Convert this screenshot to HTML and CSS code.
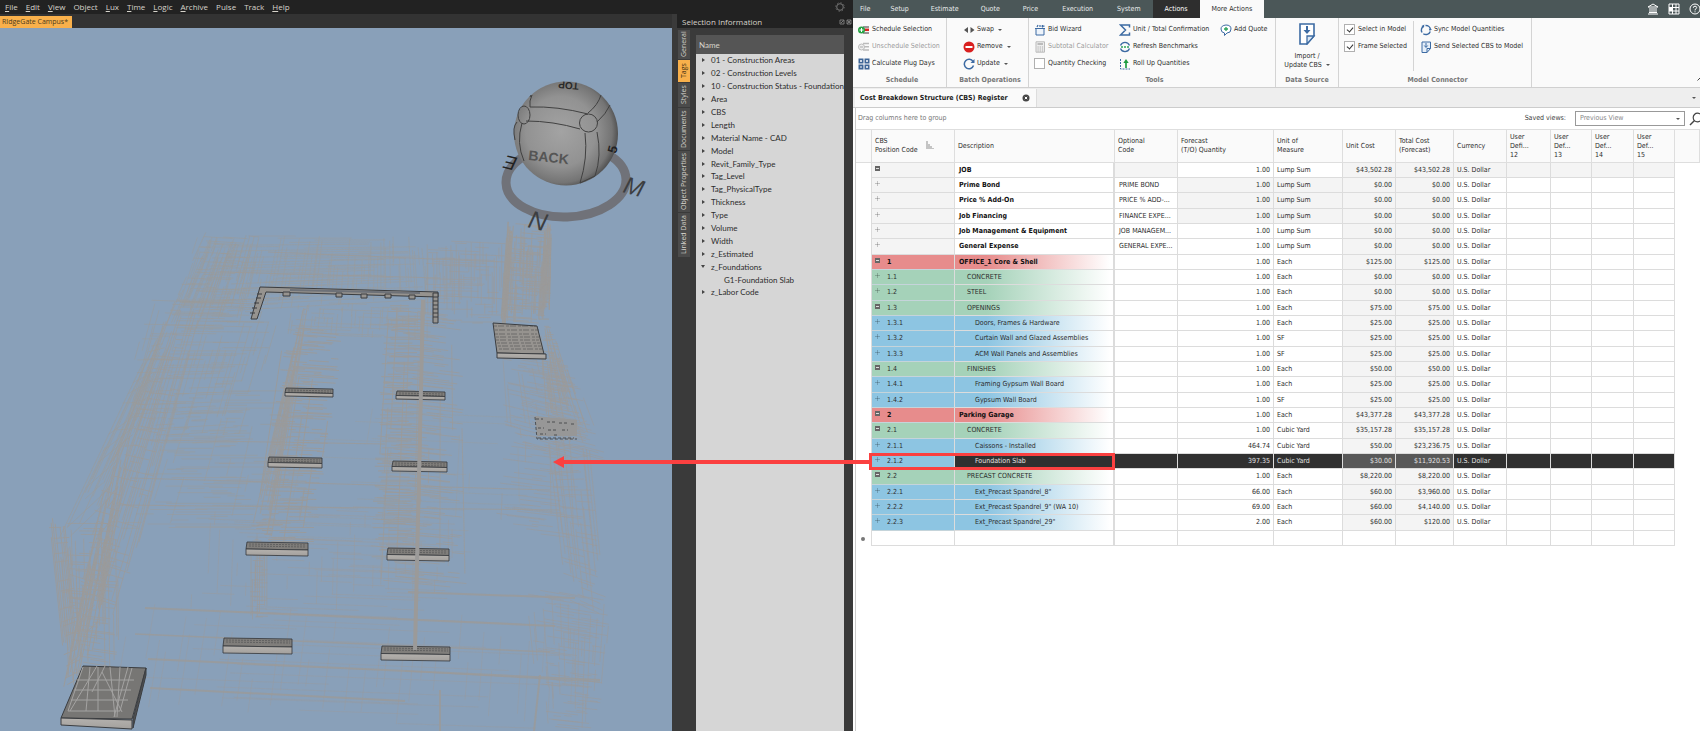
FILE: index.html
```html
<!DOCTYPE html>
<html lang="en">
<head>
<meta charset="utf-8">
<title>RidgeGate Campus - CBS Register</title>
<link rel="stylesheet" href="styles.css">
</head>
<body>
<section class="model">
  <header class="menubar">
    <nav class="menus">
      <button><u>F</u>ile</button><button><u>E</u>dit</button><button><u>V</u>iew</button><button>Object</button><button><u>L</u>ux</button><button><u>T</u>ime</button><button><u>L</u>ogic</button><button><u>A</u>rchive</button><button>Pulse</button><button>Track</button><button><u>H</u>elp</button>
    </nav>
    <svg class="gear" viewBox="0 0 10 10"><circle cx="5" cy="5" r="3.3" fill="none" stroke="#777" stroke-width="1"/><circle cx="5" cy="5" r="4.3" fill="none" stroke="#666" stroke-width="1" stroke-dasharray="1.4 1.97"/></svg>
  </header>
  <div class="workspace">
    <div class="stage">
      <div class="filetabs"><button class="filetab">RIdgeGate Campus*</button></div>
      <svg class="scene" viewBox="0 28 672 703" preserveAspectRatio="xMinYMin slice">
        <defs>
          <radialGradient id="ball" cx="45%" cy="48%" r="56%"><stop offset="0" stop-color="#a3a3a3"/><stop offset=".6" stop-color="#929292"/><stop offset=".88" stop-color="#747474"/><stop offset="1" stop-color="#4c4c4c"/></radialGradient>
          <linearGradient id="front" x1="0" x2="0" y1="0" y2="1"><stop offset="0" stop-color="#b5b2ae"/><stop offset="1" stop-color="#a3a09d"/></linearGradient>
        </defs>
        <g id="wires" fill="none" stroke="#9b9a99"></g>
        <g id="beams" stroke="#33363a" stroke-width="1"></g>
        <g stroke="#3b3d40" stroke-width="1" fill="#96938f">
          <path d="M260 287l178 5v5l-172-5-9 27h-6z"/>
          <path d="M433 293h5v30h-5z"/>
          <path d="M433 297h5m-5 4h5m-5 4h5m-5 4h5m-5 4h5m-5 4h5M262 294l-5 0m4 4l-5 0m3 5l-5 0m3 5l-5 0m3 5l-5 0"/>
          <path d="M283 292h7v4h-7zM336 293h6v4h-6zM361 294h6v4h-6zM385 294h6v4h-6zM409 295h6v4h-6z"/>
          <path d="M290 290l130 3" stroke="#6d7178" stroke-width="2"/>
          <path d="M493 323l44 3 7 28-47-1z"/>
          <path d="M497 353l49 1v5l-49-1z" fill="url(#front)"/>
          <path d="M494 326h42m-41 4h44m-44 4h42m-41 3h43m-43 3h43m-42 3h43m-42 3h43m-42 3h43" stroke-width="1" stroke-dasharray="3 1 6 2" opacity=".45"/>
          <path d="M535 416l42 4v16l-40 0z" stroke="none" fill="#979797"/>
          <path d="M535 417l2 22h40M536 419h7m4 3h9m3 1h8m4 1h5m-38 4h6m4 2h9m5 0h6m-28 4h6m8 1h5m-21 3h36" fill="none" stroke-dasharray="3 2" stroke-width=".8"/>
          <path d="M83 666l63 2-14 51-71-1z" fill="#777674"/>
          <path d="M146 668v7l-13 53v-9z" fill="#505153"/>
          <path d="M61 718l71 2v9l-71-4z" fill="url(#front)"/>
        </g>
        <path d="M83 667l-15 44h52l12-43M90 667l-4 44m12-44v44m12-44l5 50m5-50l-3 50m11-50l-14 50M77 680h57M74 690h57M71 700h57M92 692l13-26M70 711l27-45m5 6l20 40" fill="none" stroke="#a4a3a2" stroke-width="1"/>
        <path d="M423 300l-8 350" stroke="#9b9a99" stroke-width="4"/>
        <ellipse cx="566" cy="181" rx="60" ry="36" fill="none" stroke="#707279" stroke-width="9" transform="rotate(-2 566 181)"/>
        <circle cx="566" cy="133.500" r="52" fill="url(#ball)"/>
        <g fill="none" stroke="#414141" stroke-width="1">
          <path d="M530 107q27 -1 58 7M526 121q27 0 54 8M530 97l1 -2M522 123q-6 20 2 38M585 133q3 25 -5 50M597 132q5 24 -2 44M588 113q10 -8 13 -18M597 122q9 -8 13 -17M580 183l15-7M530 107q-1-6 2-12M517 122q-5 5-2 18"/>
          <ellipse cx="524" cy="115" rx="6" ry="9"/><circle cx="588.500" cy="123" r="9"/>
        </g>
        <g class="cube-label">
          <text x="528" y="160" transform="rotate(6 528 160)" font-size="14" font-weight="bold" fill="#555">BACK</text>
          <text x="579" y="83" transform="rotate(185 579 83)" font-size="10" font-weight="bold" fill="#2a2a2a">TOP</text>
          <text x="616" y="154" transform="rotate(-75 616 154)" font-size="13" font-weight="bold" fill="#222">5</text>
          <text x="527" y="227" transform="rotate(14 527 227)" font-size="25" font-style="italic" fill="#3c3e41">N</text>
          <text x="622" y="192" transform="rotate(16 622 192)" font-size="24" font-style="italic" fill="#3c3e41">M</text>
          <text x="518" y="158" transform="rotate(194 518 158)" font-size="19" font-style="italic" fill="#222">E</text>
        </g>
      </svg>
    </div>
    <aside class="panel">
      <div class="paneltitle"><h2>Selection Information</h2>
        <svg viewBox="0 0 14 6"><path d="M1 1h4v4h-4zM2 4l3-3M8 1h4v4h-4zM8 1l4 4M12 1l-4 4" fill="none" stroke="#777"/></svg></div>
      <div class="panelbody">
        <div class="sidetabs">
          <button class="h30">General</button><button class="h23 on">Tags</button><button class="h25">Styles</button><button class="h43">Documents</button><button class="h62">Object Properties</button><button class="h45">Linked Data</button>
        </div>
        <div class="tree">
          <div class="treehead">Name</div>
          <ul>
            <li>01 - Construction Areas</li><li>02 - Construction Levels</li><li>10 - Construction Status - Foundation</li><li>Area</li><li>CBS</li><li>Length</li><li>Material Name - CAD</li><li>Model</li><li>Revit_Family_Type</li><li>Tag_Level</li><li>Tag_PhysicalType</li><li>Thickness</li><li>Type</li><li>Volume</li><li>Width</li><li>z_Estimated</li><li class="open">z_Foundations</li><li class="leaf">G1-Foundation Slab</li><li>z_Labor Code</li>
          </ul>
        </div>
      </div>
    </aside>
  </div>
</section>

<section class="cost">
  <header class="tabs">
    <nav><button>File</button><button>Setup</button><button>Estimate</button><button>Quote</button><button>Price</button><button>Execution</button><button>System</button><button class="dark">Actions</button><button class="current">More Actions</button></nav>
    <div class="sysicons">
      <svg viewBox="0 0 12 12"><path d="M1 4l5-3 5 3zM1 11h10M2 9.500h8M3 5v4M5 5v4M7 5v4M9 5v4" fill="none" stroke="#fff"/></svg>
      <svg viewBox="0 0 12 12"><path d="M1 1h10v10h-10zM1 4.500h10M1 8h10M4.500 1v10M8 1v10" fill="none" stroke="#fff"/><path d="M1 4h4v4h-4z" fill="#fff"/></svg>
      <svg viewBox="0 0 12 12"><circle cx="6" cy="6" r="5" fill="none" stroke="#fff"/><path d="M4.300 4.800q0-1.600 1.700-1.600t1.700 1.400q0 .9-1.700 2v.8M6 8.300v1" fill="none" stroke="#fff"/></svg>
    </div>
  </header>
  <div class="ribbon">
    <div class="group g-schedule">
      <div class="cmds">
        <button><svg viewBox="0 0 12 12"><path d="M5 3h6M5 9h6" stroke="#777" stroke-width="1.500"/><path d="M6 5.800h5" stroke="#d22" stroke-width="2.500"/><circle cx="3.500" cy="6" r="3.500" fill="#27a343"/><path d="M1.500 6h4M3.500 4v4" stroke="#fff"/></svg>Schedule Selection</button>
        <button class="off"><svg viewBox="0 0 12 12"><path d="M5 2.500h6M5 5.800h6M5 9h6" stroke="#bbb" stroke-width="1.500"/><circle cx="3.500" cy="6" r="3" fill="#eee" stroke="#bbb"/><path d="M2 6h3" stroke="#aaa"/></svg>Unschedule Selection</button>
        <button><svg viewBox="0 0 12 12"><path d="M.5.500h5v5h-5zM6.500.500h5v5h-5zM.5 6.500h5v5h-5zM6.500 6.500h5v5h-5z" fill="#3d6596"/><path d="M2 3h2M3 2v2M8 3h2M9 2v2M2 9h2M8 9h2M9 8v2" stroke="#fff"/></svg>Calculate Plug Days</button>
      </div>
      <h3>Schedule</h3>
    </div>
    <div class="group g-batch">
      <div class="cmds">
        <button><svg viewBox="0 0 12 12"><path d="M5 3v6l-4-3zM7.500 3v6l4-3z" fill="#555"/></svg>Swap <i class="caret"></i></button>
        <button><svg viewBox="0 0 12 12"><circle cx="6" cy="6" r="5.500" fill="#d9201f"/><path d="M2.500 6h7" stroke="#fff" stroke-width="2"/></svg>Remove <i class="caret"></i></button>
        <button><svg viewBox="0 0 12 12"><path d="M10 3.500a4.700 4.700 0 1 0 .5 4" fill="none" stroke="#3d6ba3" stroke-width="1.500"/><path d="M11.500 1v4h-4z" fill="#3d6ba3"/></svg>Update <i class="caret"></i></button>
      </div>
      <h3>Batch Operations</h3>
    </div>
    <div class="group g-tools">
      <div class="cols">
        <div class="cmds">
          <button><svg viewBox="0 0 12 12"><path d="M2 4.500h8v6.500h-8zM1 4.500h10" fill="#eef4fb" stroke="#3d6ba3"/><path d="M3 3l1-2M6 3v-2M8.500 1v2.500M7.500 2.200h3" stroke="#3d6ba3" stroke-width="1.200"/></svg>Bid Wizard</button>
          <button class="off"><svg viewBox="0 0 12 12"><path d="M2 .800h8.500v10.400h-8.500z" fill="#eee" stroke="#bbb"/><path d="M3.500 3h5.500" stroke="#aaa" stroke-width="1.500"/><path d="M3.500 6h6M3.500 8h6M3.500 10h6" stroke="#aaa" stroke-dasharray="1.200 1"/></svg>Subtotal Calculator</button>
          <label><input type="checkbox">Quantity Checking</label>
        </div>
        <div class="cmds">
          <button><svg viewBox="0 0 12 12"><path d="M10.500 3.500v-2.500h-9l5 5-5 5h9v-2.500" fill="none" stroke="#3d6ba3" stroke-width="1.500"/></svg>Unit / Total Confirmation</button>
          <button><svg viewBox="0 0 12 12"><path d="M1.500 4.500a4.800 4.800 0 0 1 9 0M10.500 7.500a4.800 4.800 0 0 1-9 0" fill="none" stroke="#3d6ba3" stroke-width="1.300"/><path d="M2 6h8" stroke="#2ba45a" stroke-width="1.500" stroke-dasharray="2 1"/></svg>Refresh Benchmarks</button>
          <button><svg viewBox="0 0 12 12"><path d="M1.500 1v10h9.500" fill="none" stroke="#3d6ba3" stroke-dasharray="2 1"/><path d="M7 10v-6" stroke="#1f9c42" stroke-width="1.700"/><path d="M4.300 5l2.700-4 2.700 4z" fill="#1f9c42"/></svg>Roll Up Quantities</button>
        </div>
        <div class="cmds">
          <button><svg viewBox="0 0 12 12"><path d="M6 1q5 0 5 4t-4 4l-2.500 2.500v-2.500q-3.500-.5-3.500-4t5-4z" fill="#fff" stroke="#3d6ba3"/><path d="M4 5h4M6 3v4" stroke="#2ba45a" stroke-width="1.300"/></svg>Add Quote</button>
        </div>
      </div>
      <h3>Tools</h3>
    </div>
    <div class="group g-source">
      <button class="big"><svg viewBox="0 0 18 22"><path d="M2 1h14v12l-7 8h-7z" fill="#fff" stroke="#3d6ba3" stroke-width="1.600"/><path d="M16 13h-7v8z" fill="#dce8f5" stroke="#3d6ba3" stroke-width="1.300"/><path d="M9 3v5" stroke="#3d6ba3" stroke-width="2"/><path d="M5.500 7h7l-3.500 4z" fill="#3d6ba3"/></svg><span>Import /<br>Update CBS <i class="caret"></i></span></button>
      <h3>Data Source</h3>
    </div>
    <div class="group g-model">
      <div class="cols">
        <div class="cmds">
          <label><input type="checkbox" checked>Select in Model</label>
          <label><input type="checkbox" checked>Frame Selected</label>
        </div>
        <div class="cmds split">
          <button><svg viewBox="0 0 12 12"><path d="M2 8.500a4.600 4.600 0 0 1 2-6.500M5.500 1.500a4.600 4.600 0 0 1 5 4M10.300 7.500a4.600 4.600 0 0 1-7 2.200" fill="none" stroke="#3d6ba3" stroke-width="1.400"/><path d="M4.500.500l-1 3-2-1.500zM12 5l-2.200 2-1-2.200z" fill="#3d6ba3"/></svg>Sync Model Quantities</button>
          <button><svg viewBox="0 0 12 12"><path d="M2 1h8.500v6.500l-3.500 4h-5z" fill="#e6eff9" stroke="#3d6ba3"/><path d="M10.500 7.500h-3.500v4M6 2v4M4.300 4.500l1.700 2 1.700-2" fill="none" stroke="#3d6ba3"/></svg>Send Selected CBS to Model</button>
        </div>
      </div>
      <h3>Model Connector</h3>
    </div>
    <button class="fold" aria-label="Collapse ribbon"><svg viewBox="0 0 6 4"><path d="M.5 3.500l2.500-2.500 2.500 2.500" fill="none" stroke="#444"/></svg></button>
  </div>
  <div class="doctabs">
    <button class="doctab">Cost Breakdown Structure (CBS) Register <svg viewBox="0 0 8 8"><circle cx="4" cy="4" r="3.500" fill="#444"/><path d="M2.800 2.800l2.400 2.400M5.200 2.800l-2.400 2.400" stroke="#fff"/></svg></button>
    <i class="caret"></i>
  </div>
  <div class="register">
    <div class="groupbar">
      <span>Drag columns here to group</span>
      <div class="views">
        <label for="view">Saved views:</label>
        <div class="pick"><select id="view"><option>Previous View</option></select><i class="caret"></i></div>
        <svg viewBox="0 0 14 14"><circle cx="8.500" cy="5.500" r="4.300" fill="none" stroke="#444" stroke-width="1.200"/><path d="M5.500 8.500l-4.500 4.500" stroke="#444" stroke-width="1.500"/></svg>
      </div>
    </div>
    <table>
      <colgroup><col class="w16"><col class="w83"><col class="w160"><col class="w63"><col class="w96"><col class="w69"><col class="w53"><col class="w58"><col class="w53"><col class="w44"><col class="w41"><col class="w42"><col class="w41"><col></colgroup>
      <thead><tr><th></th><th><div class="sorted">CBS<br>Position Code<svg viewBox="0 0 8 8"><path d="M0 0v8h8v-1h-2v-2h-2v-2h-2v-3z" fill="#c4c4c4"/></svg></div></th><th>Description</th><th>Optional<br>Code</th><th>Forecast<br>(T/O) Quantity</th><th>Unit of<br>Measure</th><th>Unit Cost</th><th>Total Cost<br>(Forecast)</th><th>Currency</th><th>User<br>Defi...<br>12</th><th>User<br>Def...<br>13</th><th>User<br>Def...<br>14</th><th>User<br>Def...<br>15</th><th></th></tr></thead>
      <tbody>
        <tr class="job top"><td></td><td><button class="minus"></button></td><td>JOB</td><td></td><td>1.00</td><td>Lump Sum</td><td>$43,502.28</td><td>$43,502.28</td><td>U.S. Dollar</td><td></td><td></td><td></td><td></td><td></td></tr>
        <tr class="job calc"><td></td><td><button class="plus"></button></td><td>Prime Bond</td><td>PRIME BOND</td><td>1.00</td><td>Lump Sum</td><td>$0.00</td><td>$0.00</td><td>U.S. Dollar</td><td></td><td></td><td></td><td></td><td></td></tr>
        <tr class="job calc"><td></td><td><button class="plus"></button></td><td>Price % Add-On</td><td>PRICE % ADD-...</td><td>1.00</td><td>Lump Sum</td><td>$0.00</td><td>$0.00</td><td>U.S. Dollar</td><td></td><td></td><td></td><td></td><td></td></tr>
        <tr class="job calc"><td></td><td><button class="plus"></button></td><td>Job Financing</td><td>FINANCE EXPE...</td><td>1.00</td><td>Lump Sum</td><td>$0.00</td><td>$0.00</td><td>U.S. Dollar</td><td></td><td></td><td></td><td></td><td></td></tr>
        <tr class="job"><td></td><td><button class="plus"></button></td><td>Job Management &amp; Equipment</td><td>JOB MANAGEM...</td><td>1.00</td><td>Lump Sum</td><td>$0.00</td><td>$0.00</td><td>U.S. Dollar</td><td></td><td></td><td></td><td></td><td></td></tr>
        <tr class="job"><td></td><td><button class="plus"></button></td><td>General Expense</td><td>GENERAL EXPE...</td><td>1.00</td><td>Lump Sum</td><td>$0.00</td><td>$0.00</td><td>U.S. Dollar</td><td></td><td></td><td></td><td></td><td></td></tr>
        <tr class="l1"><td></td><td><button class="minus"></button>1</td><td>OFFICE_1 Core &amp; Shell</td><td></td><td>1.00</td><td>Each</td><td>$125.00</td><td>$125.00</td><td>U.S. Dollar</td><td></td><td></td><td></td><td></td><td></td></tr>
        <tr class="l2"><td></td><td><button class="plus"></button>1.1</td><td>CONCRETE</td><td></td><td>1.00</td><td>Each</td><td>$0.00</td><td>$0.00</td><td>U.S. Dollar</td><td></td><td></td><td></td><td></td><td></td></tr>
        <tr class="l2"><td></td><td><button class="plus"></button>1.2</td><td>STEEL</td><td></td><td>1.00</td><td>Each</td><td>$0.00</td><td>$0.00</td><td>U.S. Dollar</td><td></td><td></td><td></td><td></td><td></td></tr>
        <tr class="l2"><td></td><td><button class="minus"></button>1.3</td><td>OPENINGS</td><td></td><td>1.00</td><td>Each</td><td>$75.00</td><td>$75.00</td><td>U.S. Dollar</td><td></td><td></td><td></td><td></td><td></td></tr>
        <tr class="l3"><td></td><td><button class="plus"></button>1.3.1</td><td>Doors, Frames &amp; Hardware</td><td></td><td>1.00</td><td>Each</td><td>$25.00</td><td>$25.00</td><td>U.S. Dollar</td><td></td><td></td><td></td><td></td><td></td></tr>
        <tr class="l3"><td></td><td><button class="plus"></button>1.3.2</td><td>Curtain Wall and Glazed Assemblies</td><td></td><td>1.00</td><td>SF</td><td>$25.00</td><td>$25.00</td><td>U.S. Dollar</td><td></td><td></td><td></td><td></td><td></td></tr>
        <tr class="l3"><td></td><td><button class="plus"></button>1.3.3</td><td>ACM Wall Panels and Assemblies</td><td></td><td>1.00</td><td>SF</td><td>$25.00</td><td>$25.00</td><td>U.S. Dollar</td><td></td><td></td><td></td><td></td><td></td></tr>
        <tr class="l2"><td></td><td><button class="minus"></button>1.4</td><td>FINISHES</td><td></td><td>1.00</td><td>Each</td><td>$50.00</td><td>$50.00</td><td>U.S. Dollar</td><td></td><td></td><td></td><td></td><td></td></tr>
        <tr class="l3"><td></td><td><button class="plus"></button>1.4.1</td><td>Framing Gypsum Wall Board</td><td></td><td>1.00</td><td>Each</td><td>$25.00</td><td>$25.00</td><td>U.S. Dollar</td><td></td><td></td><td></td><td></td><td></td></tr>
        <tr class="l3"><td></td><td><button class="plus"></button>1.4.2</td><td>Gypsum Wall Board</td><td></td><td>1.00</td><td>SF</td><td>$25.00</td><td>$25.00</td><td>U.S. Dollar</td><td></td><td></td><td></td><td></td><td></td></tr>
        <tr class="l1"><td></td><td><button class="minus"></button>2</td><td>Parking Garage</td><td></td><td>1.00</td><td>Each</td><td>$43,377.28</td><td>$43,377.28</td><td>U.S. Dollar</td><td></td><td></td><td></td><td></td><td></td></tr>
        <tr class="l2"><td></td><td><button class="minus"></button>2.1</td><td>CONCRETE</td><td></td><td>1.00</td><td>Cubic Yard</td><td>$35,157.28</td><td>$35,157.28</td><td>U.S. Dollar</td><td></td><td></td><td></td><td></td><td></td></tr>
        <tr class="l3"><td></td><td><button class="plus"></button>2.1.1</td><td>Caissons - Installed</td><td></td><td>464.74</td><td>Cubic Yard</td><td>$50.00</td><td>$23,236.75</td><td>U.S. Dollar</td><td></td><td></td><td></td><td></td><td></td></tr>
        <tr class="l3 sel"><td></td><td><button class="plus"></button>2.1.2<div class="callout"><div class="arrow"></div></div></td><td>Foundation Slab</td><td></td><td>397.35</td><td>Cubic Yard</td><td>$30.00</td><td>$11,920.53</td><td>U.S. Dollar</td><td></td><td></td><td></td><td></td><td></td></tr>
        <tr class="l2"><td></td><td><button class="minus"></button>2.2</td><td>PRECAST CONCRETE</td><td></td><td>1.00</td><td>Each</td><td>$8,220.00</td><td>$8,220.00</td><td>U.S. Dollar</td><td></td><td></td><td></td><td></td><td></td></tr>
        <tr class="l3"><td></td><td><button class="plus"></button>2.2.1</td><td>Ext_Precast Spandrel_8"</td><td></td><td>66.00</td><td>Each</td><td>$60.00</td><td>$3,960.00</td><td>U.S. Dollar</td><td></td><td></td><td></td><td></td><td></td></tr>
        <tr class="l3"><td></td><td><button class="plus"></button>2.2.2</td><td>Ext_Precast Spandrel_9" (WA 10)</td><td></td><td>69.00</td><td>Each</td><td>$60.00</td><td>$4,140.00</td><td>U.S. Dollar</td><td></td><td></td><td></td><td></td><td></td></tr>
        <tr class="l3"><td></td><td><button class="plus"></button>2.2.3</td><td>Ext_Precast Spandrel_29"</td><td></td><td>2.00</td><td>Each</td><td>$60.00</td><td>$120.00</td><td>U.S. Dollar</td><td></td><td></td><td></td><td></td><td></td></tr>
        <tr class="new"><td><i class="dot"></i></td><td></td><td></td><td></td><td></td><td></td><td></td><td></td><td></td><td></td><td></td><td></td><td></td><td></td></tr>
      </tbody>
    </table>
  </div>
</section>
<script src="scene.js"></script>
</body>
</html>
```

FILE: styles.css
```css
* { box-sizing: border-box; }
body { margin: 0; min-height: 100vh; display: grid; grid-template-columns: 853fr 847fr; overflow: hidden; background: #fff; }
button { margin: 0; padding: 0; border: 0; background: none; font: inherit; color: inherit; white-space: nowrap; }
h2, h3, ul { margin: 0; padding: 0; font: inherit; list-style: none; }
.caret { display: inline-block; border: 2px solid transparent; border-top-color: #555; border-bottom: 0; vertical-align: middle; margin-left: 2px; }

/* model viewer */
.model { display: flex; flex-direction: column; min-width: 0; height: 100vh; background: #3a3a3a; color: #d6d3cb; font: 8px/12px "Open Sans", "Noto Sans", sans-serif; }
.menubar { display: flex; justify-content: space-between; align-items: center; height: 14px; background: #222; padding: 0 8px 0 5px; }
.menus { display: flex; gap: 8px; }
.menus u { text-underline-offset: 1px; }
.gear { width: 10px; height: 10px; }
.workspace { flex: 1; display: flex; min-height: 0; }
.stage { flex: 1; min-width: 0; display: flex; flex-direction: column; }
.filetabs { height: 14px; padding-top: 2px; background: #333; }
.filetab { display: block; height: 12px; padding: 0 4px 0 2px; background: #f9b04b; color: #4a3a1c; font-size: 7px; }
.scene { display: block; width: 100%; flex: 1; min-height: 0; background: #89a0b9; }
.cube-label { font-family: "Liberation Sans", Arial, sans-serif; }
.panel { width: 181px; padding-left: 5px; display: flex; flex-direction: column; }
.paneltitle { display: flex; justify-content: space-between; align-items: center; height: 14px; background: #222; padding: 2px 0 0 5px; }
.paneltitle svg { width: 14px; height: 6px; }
.panelbody { flex: 1; min-height: 0; display: flex; gap: 6px; padding: 2px 9px 0 1px; }
.sidetabs { display: flex; flex-direction: column; width: 12px; font-size: 7px; }
.sidetabs button { writing-mode: vertical-rl; transform: rotate(180deg); width: 12px; line-height: 12px; background: #4b4b4b; border-top: 1px solid #3a3a3a; text-align: center; }
.sidetabs .on { background: #f9b04b; color: #3c2c10; }
.h23 { height: 23px; } .h25 { height: 25px; } .h30 { height: 30px; } .h43 { height: 43px; } .h45 { height: 45px; } .h62 { height: 62px; }
.tree { flex: 1; min-width: 0; margin-top: 5px; background: #d6d6d6; color: #2c2c2c; overflow: hidden; font-family: Lato, "Open Sans", sans-serif; }
.treehead { height: 19px; line-height: 21px; padding-left: 3px; background: #555; color: #d6d3cb; }
.tree li { position: relative; height: 13px; line-height: 13px; padding-left: 15px; white-space: nowrap; }
.tree li:nth-child(9n) { height: 12px; }
.tree li::before { content: ""; position: absolute; left: 6px; top: 4px; border: 2px solid transparent; border-left: 3px solid #444; border-right: 0; }
.tree .open::before { left: 5px; border: 2px solid transparent; border-top: 3px solid #444; border-bottom: 0; }
.tree .leaf { padding-left: 28px; }
.tree .leaf::before { display: none; }

/* cost application */
.cost { position: relative; min-width: 0; display: flex; flex-direction: column; background: #fff; color: #2c2c2c; font: 7px/9px "DejaVu Sans Condensed", "DejaVu Sans", sans-serif; }
.tabs { display: flex; justify-content: space-between; height: 18px; background: #4b5758; color: #e8ebeb; }
.tabs nav { display: flex; }
.tabs nav button { padding: 0 11px; }
.tabs nav button:first-child { padding: 0 9px 0 7px; }
.tabs nav button:nth-child(n+5) { padding: 0 12px; }
.tabs .dark { background: #2e2e2e; color: #fff; }
.tabs .current { background: #fafafa; color: #2c2c2c; }
.sysicons { display: flex; gap: 9px; align-items: center; margin-right: -1px; }
.sysicons svg { width: 12px; height: 12px; }
.ribbon { display: flex; height: 70px; background: #fafafa; border-bottom: 1px solid #d0d0d0; }
.group { display: flex; flex-direction: column; justify-content: space-between; padding: 3px 0 2px 5px; border-right: 1px solid #d4d4d4; }
.group h3 { font-weight: bold; color: #777; text-align: center; }
.g-schedule { width: 94px; } .g-batch { width: 82px; } .g-tools { width: 247px; } .g-source { width: 63px; padding-left: 0; } .g-model { width: 193px; }
.g-batch .cmds { padding-left: 11px; }
.cmds { display: flex; flex-direction: column; }
.cmds button, .cmds label { display: flex; align-items: center; gap: 2px; height: 17px; white-space: nowrap; }
.cmds svg { width: 12px; height: 12px; flex: none; }
.cmds .off { color: #9a9a9a; }
.cols { display: flex; gap: 6px; }
.g-tools .cols { display: grid; grid-template-columns: 85px 101px auto; gap: 0; }
.split { border-left: 1px solid #d4d4d4; padding-left: 6px; height: 50px; }
input[type=checkbox] { appearance: none; position: relative; margin: 0 1px 0 0; width: 11px; height: 11px; border: 1px solid #b0b0b0; background: #fff; }
input[type=checkbox]:checked::after { content: ""; position: absolute; left: 3px; top: 1px; width: 3px; height: 5px; border: solid #333; border-width: 0 1px 1px 0; transform: rotate(40deg); }
.big { display: flex; flex-direction: column; align-items: center; gap: 7px; padding-top: 2px; }
.big svg { width: 18px; height: 22px; }
.fold { margin: auto -3px 6px auto; }
.fold svg { display: block; width: 6px; height: 4px; }
.doctabs { display: flex; justify-content: space-between; align-items: center; height: 20px; padding: 1px 4px 0 2px; background: #eee; border-bottom: 1px solid #ccc; }
.doctab { display: flex; align-items: center; gap: 14px; height: 18px; padding: 0 6px 0 5px; background: #fafafa; border-right: 1px solid #ddd; font-weight: bold; color: #222; }
.doctab svg { width: 8px; height: 8px; }
.register { flex: 1; margin-left: 2px; border-left: 1px solid #ccc; }
.groupbar { display: flex; justify-content: space-between; align-items: center; height: 21px; padding-left: 2px; color: #777; }
.views { display: flex; align-items: center; margin-right: -3px; gap: 4px; color: #3c3c3c; }
.views svg { width: 14px; height: 14px; }
.pick { display: flex; align-items: center; position: relative; margin-left: 5px; }
.pick .caret { position: absolute; right: 5px; }
.pick select { appearance: none; width: 110px; height: 15px; padding: 0 4px; border: 1px solid #999; border-radius: 0; background: #fff; color: #888; font: inherit; }

table { width: 100%; table-layout: fixed; border-collapse: separate; border-spacing: 0; }
.w16 { width: 16px; } .w83 { width: 83px; } .w160 { width: 160px; } .w63 { width: 63px; } .w96 { width: 96px; } .w69 { width: 69px; } .w53 { width: 53px; } .w58 { width: 58px; } .w44 { width: 44px; } .w41 { width: 41px; } .w42 { width: 42px; }
th { height: 34px; padding: 0 3px; text-align: left; font-weight: normal; white-space: nowrap; background: #fafafa; border: solid #dedede; border-width: 1px 1px 1px 0; }
.sorted { position: relative; }
.sorted svg { position: absolute; right: 17px; top: 4px; width: 8px; height: 8px; }
td { position: relative; height: 15px; padding: 0 3px; white-space: nowrap; border: solid #dcdcdc; border-width: 0 1px 1px 0; }
tr:nth-child(3n) td { height: 16px; }
td:first-child, td:last-child { border-bottom: 0; }
td:last-child { border-right: 0; }
td:nth-child(3), td:nth-child(4) { padding-left: 4px; }
td:nth-child(5), td:nth-child(7), td:nth-child(8) { text-align: right; }
td:nth-child(7), td:nth-child(8) { background: #f4f4f4; }
.new td:nth-child(n) { background: #fff; }
td:nth-child(3) { border-right-width: 2px; }
.job td:nth-child(2), .top td:nth-child(4), .top td:nth-child(n+9):not(:last-child), .calc td:nth-child(5), .calc td:nth-child(6) { background: #f4f4f4; }
.job td:nth-child(3), .l1 td:nth-child(2), .l1 td:nth-child(3) { font-weight: bold; color: #111; }
.l1 { --tone: #e78c8c; } .l2 { --tone: #a5d2b9; } .l3 { --tone: #8dc5e2; }
.l1 td:nth-child(2), .l2 td:nth-child(2), .l3 td:nth-child(2) { background: var(--tone); border-bottom-color: #c5d4da; }
.l1 td:nth-child(3), .l2 td:nth-child(3), .l3 td:nth-child(3) { background: linear-gradient(90deg, var(--tone) 20%, #fff 98%); }
.l2 td:nth-child(3) { padding-left: 12px; }
.l3 td:nth-child(3) { padding-left: 20px; }
.sel td:nth-child(n+3):not(:last-child) { background: #303030; color: #e2e2e2; }
.sel td:nth-child(n+7):nth-child(-n+8) { background: #585858; }
.plus, .minus { position: relative; display: inline-block; width: 5px; height: 5px; margin-right: 7px; vertical-align: 1px; }
.minus { background: #666; }
.minus::before { content: ""; position: absolute; left: 1px; top: 2px; width: 3px; height: 1px; background: #ddd; }
.plus::before, .plus::after { content: ""; position: absolute; background: #000; opacity: .2; }
.plus::before { left: 0; top: 2px; width: 5px; height: 1px; }
.plus::after { left: 2px; top: 0; width: 1px; height: 5px; }
.dot { display: block; width: 4px; height: 4px; margin-left: 2px; border-radius: 50%; background: #777; }
.callout { position: absolute; z-index: 2; left: -3px; top: -1px; width: 246px; height: 17px; border: 3px solid #fb4040; }
.arrow { position: absolute; right: 100%; top: 4px; width: 308px; height: 4px; background: #fb4040; }
.arrow::before { content: ""; position: absolute; right: 100%; top: -4px; border: 6px solid transparent; border-right: 11px solid #fb4040; border-left: 0; }
```

FILE: scene.js
```js
// Faded wireframe of the building with the foundation beams drawn over it.
const NS = "http://www.w3.org/2000/svg";
let seed = 7;
const rnd = () => (seed = (seed * 16807) % 2147483647) / 2147483647;
const wires = document.getElementById("wires");

function path(parent, d, attrs) {
  const p = document.createElementNS(NS, "path");
  p.setAttribute("d", d);
  for (const k in attrs) p.setAttribute(k, attrs[k]);
  parent.append(p);
}

// Mesh over a four-sided area: corners go clockwise from the top left.
// Each line covers a random part of the width or height, of length about 1 - gap.
function mesh(c, across, down, opacity, gap = 0.35) {
  const at = (u, v) => [0, 1].map(i =>
    (c[0][i] * (1 - u) + c[1][i] * u) * (1 - v) + (c[3][i] * (1 - u) + c[2][i] * u) * v);
  let d = "";
  const run = (f, n) => {
    n = Math.round(n * 2);
    for (let k = 0; k < n; k++) {
      const t = (k + rnd()) / n;
      const len = Math.max(0.12, 1 - gap * (0.4 + rnd()));
      const start = rnd() * (1 - len);
      const [x1, y1] = f(start, t), [x2, y2] = f(start + len, t);
      d += `M${x1.toFixed(1)} ${y1.toFixed(1)}L${x2.toFixed(1)} ${y2.toFixed(1)}`;
    }
  };
  run((s, t) => at(s, t), across);
  run((s, t) => at(t, s), down);
  path(wires, d, { opacity: Math.min(1, opacity * 1.7), "stroke-width": 1 });
}

mesh([[196, 236], [424, 236], [430, 300], [170, 315]], 20, 40, 0.3, 0.6);
mesh([[424, 238], [508, 242], [508, 325], [424, 325]], 18, 24, 0.36, 0.7);
mesh([[205, 232], [260, 236], [240, 330], [160, 330]], 22, 22, 0.35, 0.7);
mesh([[150, 300], [285, 305], [245, 440], [110, 450]], 34, 18, 0.32, 0.8);
mesh([[290, 300], [430, 305], [430, 340], [285, 335]], 8, 20, 0.3, 0.7);
mesh([[507, 221], [552, 225], [548, 325], [502, 322]], 26, 20, 0.45, 0.6);
mesh([[507, 221], [514, 221], [505, 330], [500, 330]], 4, 5, 0.6, 0.2);
mesh([[544, 221], [552, 221], [550, 320], [538, 320]], 6, 6, 0.6, 0.3);
mesh([[172, 300], [205, 300], [120, 620], [60, 600]], 24, 12, 0.42, 0.6);
mesh([[158, 330], [176, 330], [110, 500], [48, 560]], 6, 8, 0.35, 0.5);
mesh([[60, 520], [118, 520], [120, 690], [66, 680]], 26, 12, 0.42, 0.7);
mesh([[110, 460], [135, 420], [90, 670], [62, 690]], 6, 12, 0.55, 0.6);
mesh([[48, 518], [68, 518], [84, 680], [66, 690]], 8, 5, 0.5, 0.3);
mesh([[304, 305], [308, 305], [272, 540], [248, 540]], 14, 12, 0.45, 0.6);
mesh([[250, 540], [268, 540], [268, 620], [250, 620]], 12, 5, 0.4, 0.5);
mesh([[285, 325], [345, 330], [315, 545], [252, 545]], 60, 4, 0.5, 0.7);
mesh([[385, 305], [462, 315], [468, 590], [368, 580]], 62, 4, 0.42, 0.7);
mesh([[385, 305], [424, 305], [420, 560], [368, 560]], 42, 2, 0.5, 0.4);
mesh([[170, 390], [290, 390], [265, 530], [120, 530]], 40, 5, 0.3, 0.9);
mesh([[315, 400], [550, 410], [560, 560], [280, 550]], 8, 3, 0.2, 0.8);
mesh([[195, 500], [460, 510], [460, 620], [190, 610]], 22, 16, 0.26, 0.9);
mesh([[130, 600], [590, 620], [585, 731], [110, 715]], 8, 18, 0.22, 0.6);
mesh([[500, 350], [570, 360], [612, 470], [505, 440]], 34, 8, 0.33, 0.8);
mesh([[540, 325], [552, 325], [592, 440], [545, 430]], 22, 12, 0.45, 0.6);
mesh([[545, 430], [588, 420], [608, 620], [565, 600]], 16, 8, 0.36, 0.5);
mesh([[525, 585], [612, 600], [600, 731], [540, 725]], 30, 14, 0.33, 0.7);
mesh([[500, 430], [575, 440], [580, 540], [495, 530]], 18, 2, 0.33, 0.7);

// Floor edges running right across the building.
for (const [x1, y1, x2, y2, w] of [
  [268, 252, 505, 262, 1], [220, 272, 440, 278, 1], [180, 302, 260, 304, 1],
  [150, 440, 385, 444, 1], [130, 478, 550, 490, 1], [120, 505, 560, 510, 1],
  [145, 608, 555, 626, 2], [135, 634, 550, 652, 1.5], [148, 659, 600, 680, 2],
  [150, 688, 405, 701, 2], [408, 592, 575, 598, 2], [405, 671, 600, 682, 1],
  [425, 295, 530, 300, 1], [440, 690, 440, 731, 2], [540, 675, 534, 731, 2]
]) path(wires, `M${x1} ${y1}L${x2} ${y2}`, { "stroke-width": w, opacity: 0.8 });

// Foundation beams: left, top, right, bottom of each.
const beams = document.getElementById("beams");
for (const [l, t, r, b] of [
  [285, 388, 333, 397], [396, 391, 445, 400], [268, 457, 322, 468], [392, 461, 447, 472],
  [246, 542, 308, 556], [387, 548, 449, 561], [223, 638, 292, 654], [381, 646, 450, 661]
]) {
  const m = (t + b) / 2, tilt = 1;
  path(beams, `M${l + 1} ${t}L${r} ${t + tilt}V${m + tilt}L${l} ${m}Z`, { fill: "#807e7b", "stroke-width": 0.8 });
  path(beams, `M${l + 3} ${t + 2}L${r - 2} ${t + 3}M${l + 3} ${t + 4}L${r - 2} ${t + 5}`, { "stroke-dasharray": "2 1", opacity: 0.4 });
  path(beams, `M${l} ${m}L${r} ${m + tilt}V${b}L${l} ${b - tilt}Z`, { fill: "url(#front)", "stroke-width": 0.8 });
}
```
